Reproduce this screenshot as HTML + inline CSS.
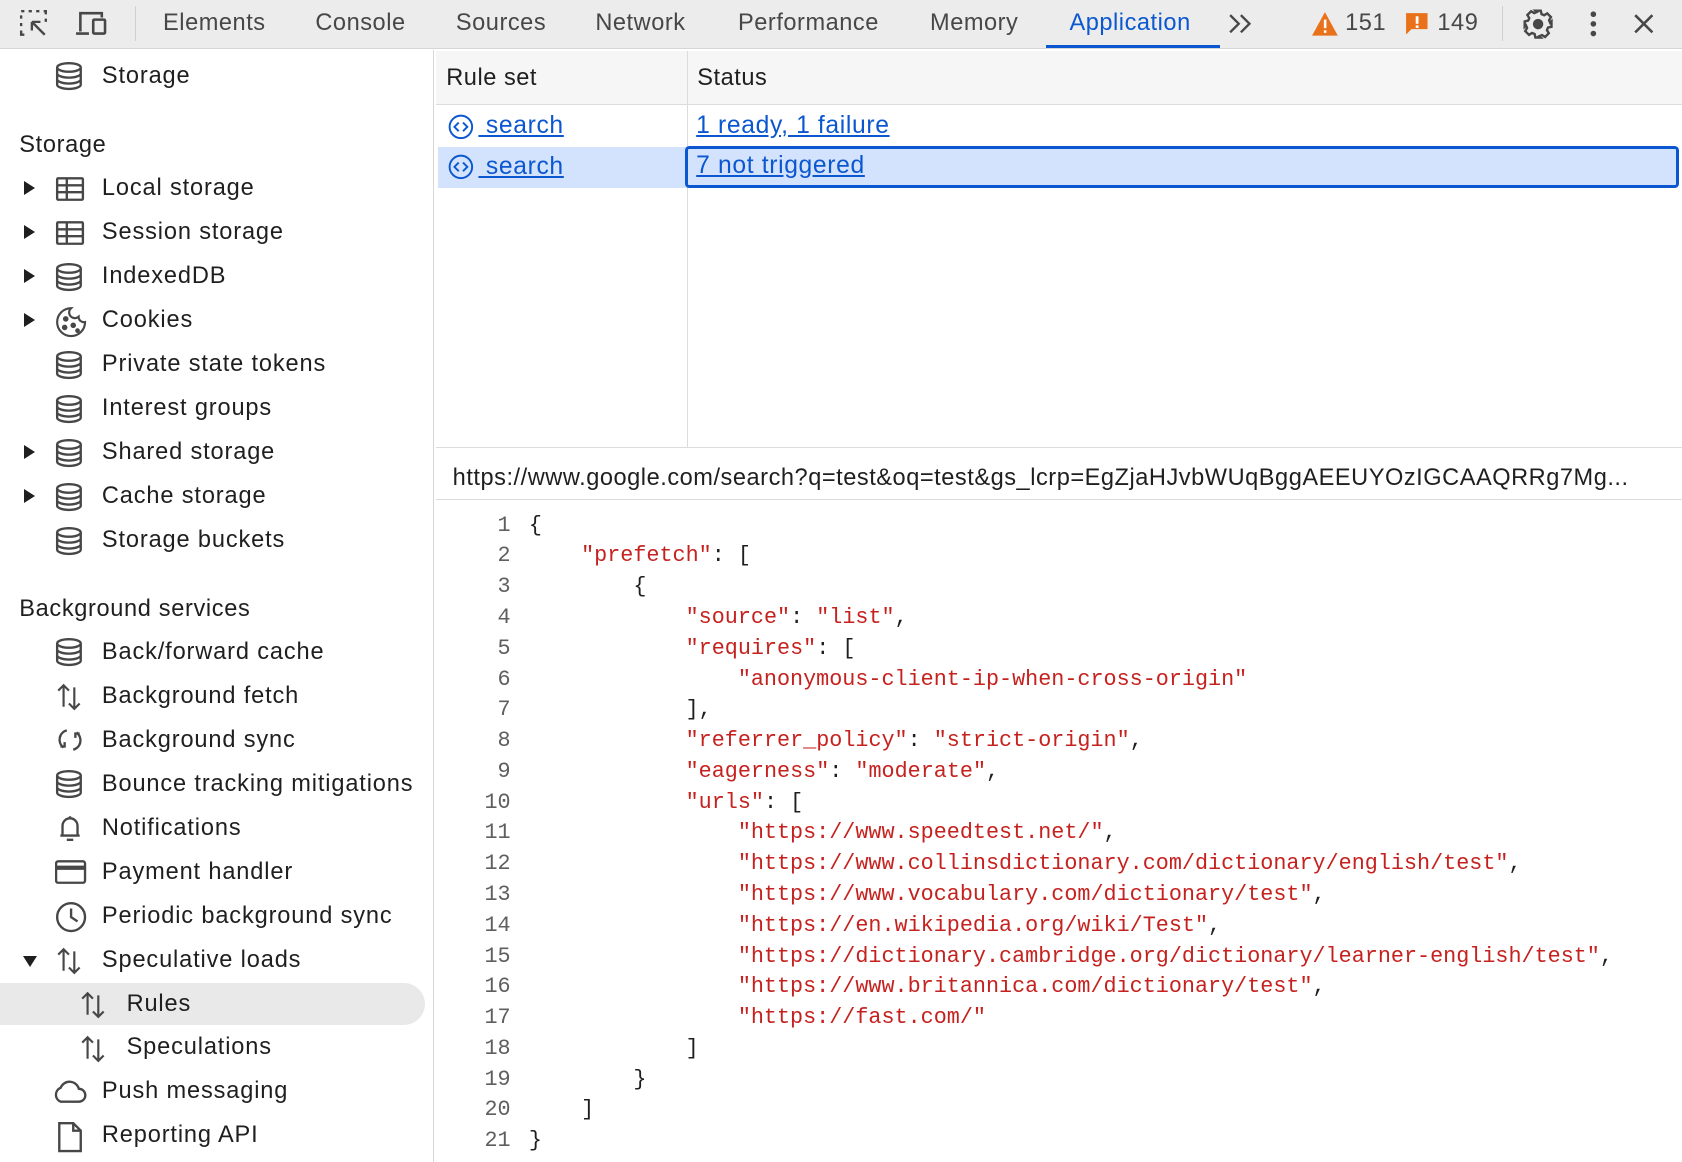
<!DOCTYPE html>
<html><head><meta charset="utf-8"><style>
*{margin:0;padding:0;box-sizing:border-box}
html,body{width:1682px;height:1162px;overflow:hidden;background:#fff}
#w{position:absolute;left:0;top:0;width:1568px;height:1083px;zoom:1.07270;font-family:"Liberation Sans",sans-serif;color:#1f1f1f}
.tb{position:absolute;left:0;top:0;width:1568px;height:46px;background:#ececec;border-bottom:1px solid #d6d6d6}
.tab{position:absolute;top:0;height:46px;line-height:42px;font-size:22px;letter-spacing:0.5px;color:#474747}
.side{position:absolute;left:0;top:47px;width:405px;height:1036px;border-right:1px solid #d6d6d6;background:#fff}
.r{position:absolute;left:0;height:41px;line-height:41px;font-size:22px;letter-spacing:0.8px;white-space:nowrap}
.r .t{position:absolute;left:95px}
.r svg.i{position:absolute;left:51px;top:7px}
.r .ar{position:absolute;left:22px;top:14px;width:0;height:0;border-left:11px solid #1f1f1f;border-top:7px solid transparent;border-bottom:7px solid transparent}
.r .ad{position:absolute;left:21px;top:17px;width:0;height:0;border-top:11px solid #1f1f1f;border-left:7px solid transparent;border-right:7px solid transparent}
.h{position:absolute;left:18px;font-size:22px;letter-spacing:0.6px}
.main{position:absolute;left:406px;top:47px;width:1162px;height:1036px}
.link{color:#0b57d0;text-decoration:underline;font-size:23px;letter-spacing:0.6px}
.code{position:absolute;left:0;top:429px;font-family:"Liberation Mono",monospace;font-size:20.3px;white-space:pre;line-height:28.7px}
.ln{display:inline-block;width:70px;text-align:right;color:#5f5f5f;margin-right:17px}
.s{color:#c5221f}
</style></head><body><div id="w">
<div class="tb">
<svg style="position:absolute;left:18px;top:8px" width="28" height="28" viewBox="0 0 28 28" fill="none" stroke="#474747" stroke-width="2.2"><path d="M2 2h3M9 2h3M16 2h3M23 2h2v3M2 6v3M2 13v3M2 20v4h3M25 9v3M12 12l12 12M12 12h8M12 12v8" /></svg>
<svg style="position:absolute;left:70px;top:9px" width="30" height="26" viewBox="0 0 30 26" fill="none" stroke="#474747" stroke-width="2.4"><path d="M5 20V3h20v4M1 22h12"/><rect x="17" y="9" width="11" height="13" rx="1"/></svg>
<div style="position:absolute;left:126px;top:6px;width:1px;height:32px;background:#d0d0d0"></div>
<div class="tab" style="left:152px">Elements</div>
<div class="tab" style="left:294px">Console</div>
<div class="tab" style="left:425px">Sources</div>
<div class="tab" style="left:555px">Network</div>
<div class="tab" style="left:688px">Performance</div>
<div class="tab" style="left:867px">Memory</div>
<div class="tab" style="left:997px;color:#0b57d0">Application</div>
<div style="position:absolute;left:975px;top:42px;width:162px;height:3px;background:#0b57d0"></div>
<svg style="position:absolute;left:1145px;top:12px" width="24" height="20" fill="none" stroke="#474747" stroke-width="2.2"><path d="M2 2l8 8-8 8M12 2l8 8-8 8"/></svg>
<svg style="position:absolute;left:1222px;top:10px" width="26" height="24" viewBox="0 0 26 24"><path d="M13 1L25 23H1z" fill="#e8711a"/><rect x="12" y="8" width="2.4" height="8" fill="#fff"/><rect x="12" y="18" width="2.4" height="2.4" fill="#fff"/></svg>
<div class="tab" style="left:1254px;color:#474747">151</div>
<svg style="position:absolute;left:1310px;top:11px" width="24" height="22" viewBox="0 0 24 22"><path d="M1 1h20v15H6l-5 5z" fill="#e8711a"/><rect x="10" y="4" width="2.6" height="7" fill="#fff"/><rect x="10" y="12.5" width="2.6" height="2.4" fill="#fff"/></svg>
<div class="tab" style="left:1340px">149</div>
<div style="position:absolute;left:1400px;top:6px;width:1px;height:32px;background:#d0d0d0"></div>
<svg style="position:absolute;left:1419px;top:7px" width="30" height="30" viewBox="0 0 24 24" fill="none" stroke="#474747" stroke-width="1.8"><path d="M10 2h4l.6 2.6 1.9.8 2.3-1.4 2.8 2.8-1.4 2.3.8 1.9L22 10v4l-2.6.6-.8 1.9 1.4 2.3-2.8 2.8-2.3-1.4-1.9.8L14 22h-4l-.6-2.6-1.9-.8-2.3 1.4-2.8-2.8 1.4-2.3-.8-1.9L2 14v-4l2.6-.6.8-1.9-1.4-2.3 2.8-2.8 2.3 1.4 1.9-.8z"/><circle cx="12" cy="12" r="3" fill="#474747"/></svg>
<svg style="position:absolute;left:1480px;top:10px" width="10" height="26"><circle cx="5" cy="3" r="2.6" fill="#474747"/><circle cx="5" cy="12" r="2.6" fill="#474747"/><circle cx="5" cy="21" r="2.6" fill="#474747"/></svg>
<svg style="position:absolute;left:1521px;top:11px" width="22" height="22" stroke="#474747" stroke-width="2.4"><path d="M3 3l16 16M19 3L3 19"/></svg>
</div>

<div class="side">
<svg width="0" height="0" style="position:absolute"><defs>
<g id="db" fill="none" stroke="#474747" stroke-width="2.2"><ellipse cx="13" cy="6" rx="11" ry="4"/><path d="M2 6v16c0 2.2 5 4 11 4s11-1.8 11-4V6M2 11.5c0 2.2 5 4 11 4s11-1.8 11-4M2 17c0 2.2 5 4 11 4s11-1.8 11-4"/></g>
<g id="tbl" fill="none" stroke="#474747" stroke-width="2.2"><rect x="2" y="4" width="24" height="20" rx="1"/><path d="M2 10.5h24M2 17h24M11 4v20"/></g>
<g id="upd" fill="none" stroke="#474747" stroke-width="2"><path d="M8 24V4M3 9l5-5 5 5M18 6v20M13 21l5 5 5-5"/></g>
</defs></svg>
<div class="r" style="top:3px"><svg class="i" width="28" height="28"><use href="#db"/></svg><span class="t">Storage</span></div>
<div class="h" style="top:75px">Storage</div>
<div class="r" style="top:108px"><span class="ar"></span><svg class="i" width="28" height="28"><use href="#tbl"/></svg><span class="t">Local storage</span></div>
<div class="r" style="top:149px"><span class="ar"></span><svg class="i" width="28" height="28"><use href="#tbl"/></svg><span class="t">Session storage</span></div>
<div class="r" style="top:190px"><span class="ar"></span><svg class="i" width="28" height="28"><use href="#db"/></svg><span class="t">IndexedDB</span></div>
<div class="r" style="top:231px"><span class="ar"></span><svg class="i" width="30" height="30" fill="none" stroke="#474747" stroke-width="2"><path d="M15 2a13 13 0 1 0 13 13 5 5 0 0 1-6-5 5 5 0 0 1-7-8z"/><circle cx="10" cy="12" r="1.6" fill="#474747"/><circle cx="9" cy="20" r="1.6" fill="#474747"/><circle cx="17" cy="18" r="1.6" fill="#474747"/><circle cx="21" cy="23" r="1.2" fill="#474747"/></svg><span class="t">Cookies</span></div>
<div class="r" style="top:272px"><svg class="i" width="28" height="28"><use href="#db"/></svg><span class="t">Private state tokens</span></div>
<div class="r" style="top:313px"><svg class="i" width="28" height="28"><use href="#db"/></svg><span class="t">Interest groups</span></div>
<div class="r" style="top:354px"><span class="ar"></span><svg class="i" width="28" height="28"><use href="#db"/></svg><span class="t">Shared storage</span></div>
<div class="r" style="top:395px"><span class="ar"></span><svg class="i" width="28" height="28"><use href="#db"/></svg><span class="t">Cache storage</span></div>
<div class="r" style="top:436px"><svg class="i" width="28" height="28"><use href="#db"/></svg><span class="t">Storage buckets</span></div>
<div class="h" style="top:508px">Background services</div>
<div class="r" style="top:540px"><svg class="i" width="28" height="28"><use href="#db"/></svg><span class="t">Back/forward cache</span></div>
<div class="r" style="top:581px"><svg class="i" width="28" height="30"><use href="#upd"/></svg><span class="t">Background fetch</span></div>
<div class="r" style="top:622px"><svg class="i" width="28" height="28" fill="none" stroke="#474747" stroke-width="2.2"><path d="M11 5a9 9 0 0 0-3 16M5 20h4v-4M17 23a9 9 0 0 0 3-16M23 8h-4v4"/></svg><span class="t">Background sync</span></div>
<div class="r" style="top:663px"><svg class="i" width="28" height="28"><use href="#db"/></svg><span class="t">Bounce tracking mitigations</span></div>
<div class="r" style="top:704px"><svg class="i" width="28" height="28" fill="none" stroke="#474747" stroke-width="2.2"><path d="M5 21h18M7 21V12a7 7 0 0 1 14 0v9M11 25h6M14 3v2"/></svg><span class="t">Notifications</span></div>
<div class="r" style="top:745px"><svg class="i" width="30" height="28" fill="none" stroke="#474747" stroke-width="2.2"><rect x="1" y="4" width="27" height="20" rx="2"/><path d="M1 10h27" stroke-width="4"/></svg><span class="t">Payment handler</span></div>
<div class="r" style="top:786px"><svg class="i" width="30" height="30" fill="none" stroke="#474747" stroke-width="2.2"><circle cx="15" cy="15" r="13"/><path d="M15 7v8l6 4"/></svg><span class="t">Periodic background sync</span></div>
<div class="r" style="top:827px"><span class="ad"></span><svg class="i" width="28" height="30"><use href="#upd"/></svg><span class="t">Speculative loads</span></div>
<div style="position:absolute;left:0;top:869px;width:396px;height:40px;background:#e9e9e9;border-radius:0 20px 20px 0"></div>
<div class="r" style="top:868px"><svg class="i" style="left:74px" width="28" height="30"><use href="#upd"/></svg><span class="t" style="left:118px">Rules</span></div>
<div class="r" style="top:909px"><svg class="i" style="left:74px" width="28" height="30"><use href="#upd"/></svg><span class="t" style="left:118px">Speculations</span></div>
<div class="r" style="top:950px"><svg class="i" style="left:48px" width="34" height="28" fill="none" stroke="#474747" stroke-width="2.2"><path d="M9 23h17a6 6 0 0 0 0-12 9 9 0 0 0-17-1A7 7 0 0 0 9 23z"/></svg><span class="t">Push messaging</span></div>
<div class="r" style="top:991px"><svg class="i" width="28" height="30" fill="none" stroke="#474747" stroke-width="2.2"><path d="M4 2h13l7 7v19H4zM17 2v7h7"/></svg><span class="t">Reporting API</span></div>
</div>

<div class="main">
<div style="position:absolute;left:0;top:1px;width:1162px;height:50px;background:#f6f6f6;border-bottom:1px solid #dcdcdc"></div>
<div style="position:absolute;left:10px;top:13px;font-size:22px;letter-spacing:0.5px">Rule set</div>
<div style="position:absolute;left:244px;top:13px;font-size:22px;letter-spacing:0.5px">Status</div>
<div style="position:absolute;left:234px;top:1px;width:1px;height:370px;background:#dcdcdc"></div>
<div style="position:absolute;left:2px;top:90px;width:232px;height:38px;background:#d3e3fd"></div>
<div style="position:absolute;left:233px;top:89px;width:926px;height:39px;background:#d3e3fd;border:3px solid #0b57d0;border-radius:4px"></div>
<svg style="position:absolute;left:12px;top:59px" width="24" height="24" fill="none" stroke="#0b57d0" stroke-width="1.8"><circle cx="12" cy="12" r="10.5"/><path d="M10 8l-4 4 4 4M14 8l4 4-4 4"/></svg>
<div style="position:absolute;left:40px;top:57px" class="link">&nbsp;search</div>
<svg style="position:absolute;left:12px;top:97px" width="24" height="24" fill="none" stroke="#0b57d0" stroke-width="1.8"><circle cx="12" cy="12" r="10.5"/><path d="M10 8l-4 4 4 4M14 8l4 4-4 4"/></svg>
<div style="position:absolute;left:40px;top:96px" class="link">&nbsp;search</div>
<div style="position:absolute;left:243px;top:57px" class="link">1 ready, 1 failure</div>
<div style="position:absolute;left:243px;top:95px" class="link">7 not triggered</div>
<div style="position:absolute;left:0;top:370px;width:1162px;height:1px;background:#dcdcdc"></div>
<div style="position:absolute;left:0;top:371px;width:1162px;height:48px;border-bottom:1px solid #dcdcdc"></div>
<div style="position:absolute;left:16px;top:386px;font-size:22px;letter-spacing:0.5px;white-space:nowrap">https://www.google.com/search?q=test&amp;oq=test&amp;gs_lcrp=EgZjaHJvbWUqBggAEEUYOzIGCAAQRRg7Mg...</div>
<div class="code"><span class="ln">1</span>{
<span class="ln">2</span>    <span class="s">"prefetch"</span>: [
<span class="ln">3</span>        {
<span class="ln">4</span>            <span class="s">"source"</span>: <span class="s">"list"</span>,
<span class="ln">5</span>            <span class="s">"requires"</span>: [
<span class="ln">6</span>                <span class="s">"anonymous-client-ip-when-cross-origin"</span>
<span class="ln">7</span>            ],
<span class="ln">8</span>            <span class="s">"referrer_policy"</span>: <span class="s">"strict-origin"</span>,
<span class="ln">9</span>            <span class="s">"eagerness"</span>: <span class="s">"moderate"</span>,
<span class="ln">10</span>            <span class="s">"urls"</span>: [
<span class="ln">11</span>                <span class="s">"https://www.speedtest.net/"</span>,
<span class="ln">12</span>                <span class="s">"https://www.collinsdictionary.com/dictionary/english/test"</span>,
<span class="ln">13</span>                <span class="s">"https://www.vocabulary.com/dictionary/test"</span>,
<span class="ln">14</span>                <span class="s">"https://en.wikipedia.org/wiki/Test"</span>,
<span class="ln">15</span>                <span class="s">"https://dictionary.cambridge.org/dictionary/learner-english/test"</span>,
<span class="ln">16</span>                <span class="s">"https://www.britannica.com/dictionary/test"</span>,
<span class="ln">17</span>                <span class="s">"https://fast.com/"</span>
<span class="ln">18</span>            ]
<span class="ln">19</span>        }
<span class="ln">20</span>    ]
<span class="ln">21</span>}</div>
</div>
</div></body></html>
